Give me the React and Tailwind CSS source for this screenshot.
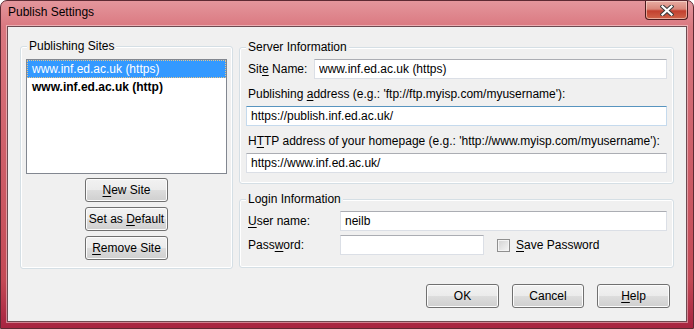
import React from 'react';

const btn =
  'flex items-center justify-center h-[24px] rounded-[3px] border border-[#707070] bg-[linear-gradient(#f2f2f2,#ebebeb_50%,#dddddd_50%,#cfcfcf)] shadow-[inset_0_0_0_1px_#fcfcfc] text-[12px] leading-[15px] text-black';

const field =
  'h-[20px] border border-[#dbdfe6] border-t-[#abadb3] bg-white px-[4px] text-[12px] leading-[15px] text-black outline-none';

const Key = ({ children }) => (
  <span className="underline decoration-1 underline-offset-[2px]">{children}</span>
);

const GroupBox = ({ label, className, children }) => (
  <div
    className={
      'relative rounded-[3px] border border-[#d5dfe5] shadow-[inset_0_0_0_1px_#ffffff] ' +
      className
    }
  >
    <span className="absolute -top-[8px] left-[6px] bg-[#f0f0f0] px-[2px] leading-[15px]">
      {label}
    </span>
    {children}
  </div>
);

const CloseButton = () => (
  <div className="-mr-[1px] mt-0 flex h-[19px] w-[43px] items-center justify-center rounded-b-[4px] border border-t-0 border-[#4a1c1e] bg-[linear-gradient(#e8ada3,#d9867a_45%,#c2402f_55%,#d0644a)] shadow-[inset_0_0_0_1px_rgba(255,230,220,0.55)]">
    <svg width="14" height="11" viewBox="0 0 14 11">
      <path d="M2.5 1.5 L11.5 9.5 M11.5 1.5 L2.5 9.5" stroke="#3b3b3b" strokeWidth="4.2" strokeLinecap="square" />
      <path d="M2.5 1.5 L11.5 9.5 M11.5 1.5 L2.5 9.5" stroke="#ffffff" strokeWidth="2.2" strokeLinecap="square" />
    </svg>
  </div>
);

export default function App() {
  return (
    <div className="flex h-[329px] w-[694px] flex-col rounded-t-[7px] border border-[#5d2a33] bg-[linear-gradient(180deg,#e4969c_0%,#da7880_8%,#cf606a_45%,#c44a56_85%,#a72440_100%)] px-[6px] pb-[6px] font-['Liberation_Sans',Arial,sans-serif] text-[12px] text-black">
      <div className="flex h-[25px] items-start justify-between">
        <span className="pl-[1px] pt-[4px] leading-[15px] text-black">Publish Settings</span>
        <CloseButton />
      </div>

      <div className="flex h-[296px] flex-col border border-[#6d4a51] bg-[#f0f0f0] px-[12px] pt-[19px] shadow-[0_0_0_1px_rgba(255,240,240,0.45)]">
        <div className="flex items-start gap-[6px]">
          <GroupBox label="Publishing Sites" className="w-[213px] px-[5px] pb-[8px] pt-[12px]">
            <div className="h-[115px] border border-[#828790] bg-white">
              <div className="flex h-[18px] items-center border border-dotted border-[#e6c58a] bg-[#3399ff] pl-[4px] leading-[15px] text-white">
                www.inf.ed.ac.uk (https)
              </div>
              <div className="flex h-[18px] items-center pl-[5px] font-bold leading-[15px]">
                www.inf.ed.ac.uk (http)
              </div>
            </div>
            <div className="mt-[4px] flex flex-col items-center gap-[5px]">
              <div className={btn + ' w-[83px]'}>
                <Key>N</Key>ew Site
              </div>
              <div className={btn + ' w-[83px]'}>
                Set as&nbsp;<Key>D</Key>efault
              </div>
              <div className={btn + ' w-[83px]'}>
                <Key>R</Key>emove Site
              </div>
            </div>
          </GroupBox>

          <div className="mt-[1px] flex w-[435px] flex-col">
            <GroupBox label="Server Information" className="px-[6px] pb-[10px] pt-[11px]">
              <div className="flex items-center">
                <span className="ml-[2px] w-[66px] leading-[15px]">
                  Sit<Key>e</Key> Name:
                </span>
                <input className={field + ' flex-1'} defaultValue="www.inf.ed.ac.uk (https)" />
              </div>
              <div className="ml-[2px] mt-[7px] h-[16px] leading-[16px]">
                Publishing <Key>a</Key>ddress (e.g.: 'ftp://ftp.myisp.com/myusername'):
              </div>
              <input
                className="mt-[4px] h-[20px] w-full border border-[#c5daed] border-t-[#5794bf] bg-white px-[4px] text-[12px] leading-[15px] outline-none"
                defaultValue="https://publish.inf.ed.ac.uk/"
              />
              <div className="ml-[2px] mt-[7px] h-[16px] leading-[16px]">
                H<Key>T</Key>TP address of your homepage (e.g.: 'http://www.myisp.com/myusername'):
              </div>
              <input className={field + ' mt-[4px] w-full'} defaultValue="https://www.inf.ed.ac.uk/" />
            </GroupBox>

            <GroupBox label="Login Information" className="mt-[15px] px-[6px] pb-[12px] pt-[11px]">
              <div className="flex items-center">
                <span className="ml-[2px] w-[92px] leading-[15px]">
                  <Key>U</Key>ser name:
                </span>
                <input className={field + ' flex-1'} defaultValue="neilb" />
              </div>
              <div className="mt-[4px] flex items-center">
                <span className="ml-[2px] w-[92px] leading-[15px]">
                  Pass<Key>w</Key>ord:
                </span>
                <input className={field + ' w-[144px]'} type="password" defaultValue="" />
                <div className="ml-[13px] h-[13px] w-[13px] border border-[#8f8f8f] bg-[linear-gradient(135deg,#d2d2d2,#f6f6f6)] shadow-[inset_0_0_0_1px_#f4f4f4]" />
                <span className="ml-[6px] leading-[15px]">
                  <Key>S</Key>ave Password
                </span>
              </div>
            </GroupBox>
          </div>
        </div>

        <div className="mt-[15px] flex justify-end gap-[13px] pr-[4px]">
          <div className={btn + ' w-[73px] border-[#3c7fb1] shadow-[inset_0_0_0_1px_#a6dcf5]'}>OK</div>
          <div className={btn + ' w-[72px]'}>Cancel</div>
          <div className={btn + ' w-[73px]'}>
            <Key>H</Key>elp
          </div>
        </div>
      </div>
    </div>
  );
}
